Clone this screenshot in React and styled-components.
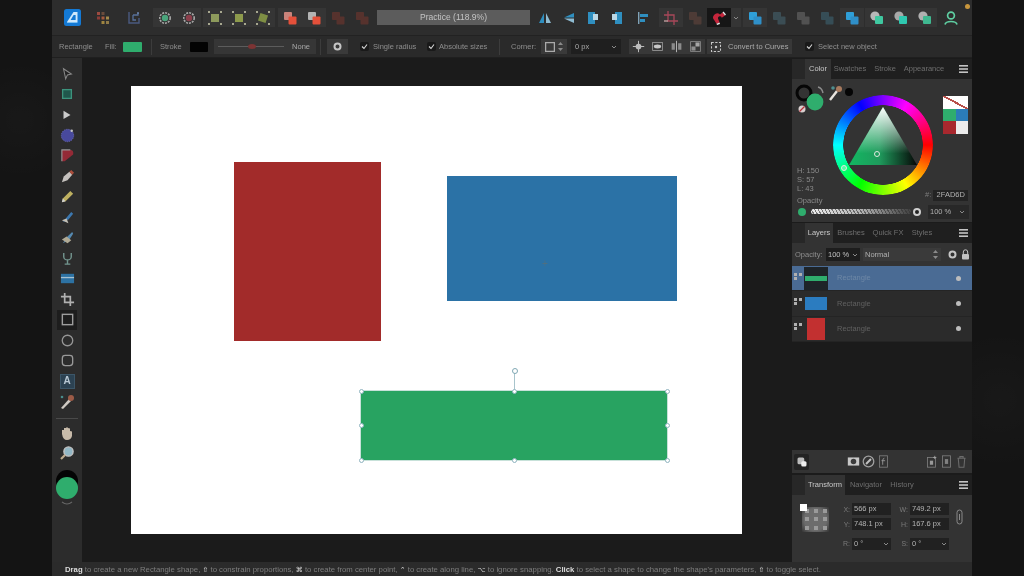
import React from "react";
import styled, { createGlobalStyle } from "styled-components";

const GlobalStyle = createGlobalStyle`
  html, body {
    margin: 0;
    padding: 0;
    width: 1024px;
    height: 576px;
    overflow: hidden;
    background: #141414;
    font-family: "Liberation Sans", Arial, sans-serif;
  }
`;

const GREEN = "#2fad6d";

/* ---------- small drawings ---------- */

const Svg = ({ s = 16, children }) => (
  <svg width={s} height={s} viewBox="0 0 16 16" fill="none">
    {children}
  </svg>
);

const Logo = () => (
  <svg width="17" height="17" viewBox="0 0 17 17">
    <rect width="17" height="17" rx="2.5" fill="#1479d4" />
    <path d="M9.5 3 L13.5 3 L13.5 13 L3 13 Z" fill="#cfe8fb" />
    <path d="M9.6 6 L6.6 11 L11.6 11 L11.6 6 Z" fill="#1479d4" />
    <path d="M3 13 L13.5 13 L13.5 14 L3 14 Z" fill="#7dc0f2" />
  </svg>
);

const Personas = () => (
  <Svg>
    <rect x="2" y="2" width="3" height="3" fill="#9c4a40" />
    <rect x="6.5" y="2" width="3" height="3" fill="#6b4c3c" />
    <rect x="6.5" y="6.5" width="3" height="3" fill="#a65a3c" />
    <rect x="11" y="6.5" width="3" height="3" fill="#a28a4c" />
    <rect x="2" y="6.5" width="3" height="3" fill="#8c3d38" />
    <rect x="6.5" y="11" width="3" height="3" fill="#a0853f" />
    <rect x="11" y="11" width="3" height="3" fill="#8f7a48" />
  </Svg>
);

const Develop = () => (
  <Svg>
    <path d="M3 2 V13 H13 V8" stroke="#4a5a80" strokeWidth="1.4" />
    <path d="M7 5 H12 V3 M7 5 V10 H10" stroke="#57709a" strokeWidth="1.3" />
    <circle cx="12" cy="3" r="1" fill="#6b84ac" />
  </Svg>
);

const Gear = ({ c }) => (
  <Svg>
    <circle cx="8" cy="8" r="5.2" stroke="#a8a8a8" strokeWidth="1.6" strokeDasharray="2 1" />
    <circle cx="8" cy="8" r="3.2" fill={c} />
  </Svg>
);

const BoxHandles = ({ c, tilt }) => (
  <Svg>
    <rect x="4" y="4" width="8" height="8" fill={c} transform={tilt ? "rotate(18 8 8)" : undefined} />
    {[2, 14].map((x) =>
      [2, 14].map((y) => <rect key={x + "-" + y} x={x - 1} y={y - 1} width="2" height="2" fill="#a8a890" />)
    )}
  </Svg>
);

const Overlap = ({ back, front, dim }) => (
  <Svg>
    <g opacity={dim ? 0.28 : 1}>
      <rect x="2" y="2" width="8" height="8" rx="1" fill={back} />
      <rect x="6.5" y="6.5" width="8" height="8" rx="1" fill={front} />
    </g>
  </Svg>
);

const RoundOverlap = ({ back, front, dim }) => (
  <Svg>
    <g opacity={dim ? 0.28 : 1}>
      <circle cx="6" cy="6" r="4.6" fill={back} />
      <rect x="6" y="6" width="8" height="8" rx="1" fill={front} />
    </g>
  </Svg>
);

const FlipH = () => (
  <Svg>
    <path d="M7 3 V13 H2 Z" fill="#2f8fc0" />
    <path d="M9 3 V13 H14 Z" fill="#8fbcd2" />
  </Svg>
);

const FlipV = () => (
  <Svg>
    <path d="M13 3 L3 7.4 H13 Z" fill="#2f8fc0" />
    <path d="M13 13 L3 8.6 H13 Z" fill="#8fbcd2" />
  </Svg>
);

const Rotate = ({ flip }) => (
  <svg width="16" height="16" viewBox="0 0 16 16" style={flip ? { transform: "scaleX(-1)" } : undefined}>
    <rect x="3" y="2" width="7" height="12" fill="#2f8fc0" />
    <rect x="8" y="4" width="5" height="6" fill="#bcd8e6" />
  </svg>
);

const Align = () => (
  <Svg>
    <rect x="3" y="2" width="1.4" height="12" fill="#7fa3b8" />
    <rect x="5" y="4" width="8" height="3" fill="#2f8fc0" />
    <rect x="5" y="9" width="5" height="3" fill="#2f8fc0" />
  </Svg>
);

const CropRed = () => (
  <Svg>
    <path d="M5 1 V11 H15 M1 5 H11 V15" stroke="#a8485a" strokeWidth="1.3" />
    <path d="M1 11 H5" stroke="#c9a8a8" strokeWidth="1.3" />
  </Svg>
);

const Magnet = () => (
  <Svg>
    <path d="M3.5 10.5 A4 4 0 0 1 9 4.5 L11.5 2.5 L14 5.5 L10.8 7.8 A1.2 1.2 0 0 0 7 8.5 L8.5 12.5 L5.5 13.8 Z" fill="#c4263c" />
    <path d="M5.5 13.8 L8.5 12.5 L9 14 L6 15 Z" fill="#e8e8e8" />
    <path d="M11.5 2.5 L14 5.5 L15 4.6 L12.5 1.6 Z" fill="#e8e8e8" />
  </Svg>
);

const Person = () => (
  <Svg>
    <circle cx="8" cy="5.5" r="3.4" stroke="#5fcfa2" strokeWidth="1.7" />
    <path d="M2 14.5 C3 10.5 13 10.5 14 14.5" stroke="#5fcfa2" strokeWidth="1.7" />
  </Svg>
);

const Chevron = () => (
  <svg width="6" height="6" viewBox="0 0 6 6" fill="none">
    <path d="M1 2 L3 4 L5 2" stroke="#8a8a8a" strokeWidth="1" />
  </svg>
);

const Stepper = () => (
  <svg width="5" height="9" viewBox="0 0 5 9" fill="#8a8a8a">
    <path d="M2.5 0 L5 3 H0 Z" />
    <path d="M2.5 9 L5 6 H0 Z" />
  </svg>
);

const Menu = () => (
  <svg width="9" height="8" viewBox="0 0 9 8" fill="#c4c4c4">
    <rect width="9" height="1.6" />
    <rect y="3.2" width="9" height="1.6" />
    <rect y="6.4" width="9" height="1.6" />
  </svg>
);

const GearSmall = ({ c = "#c6c6c6" }) => (
  <svg width="11" height="11" viewBox="0 0 11 11" fill="none">
    <circle cx="5.5" cy="5.5" r="3" stroke={c} strokeWidth="2" />
  </svg>
);

const Lock = () => (
  <svg width="9" height="11" viewBox="0 0 9 11" fill="none">
    <path d="M2.3 5 V3 A2.2 2.2 0 0 1 6.7 3 V5" stroke="#c4c4c4" />
    <rect x="1" y="5" width="7" height="5.5" rx="1" fill="#c4c4c4" />
  </svg>
);

const Tick = () => (
  <svg width="7" height="7" viewBox="0 0 7 7" fill="none">
    <path d="M1 3.5 L3 5.5 L6 1.5" stroke="#d8d8d8" strokeWidth="1.1" />
  </svg>
);

const Snap = ({ kind }) => (
  <Svg s={13}>
    {kind === 0 && (
      <>
        <circle cx="8" cy="8" r="3.5" fill="#bdbdbd" />
        <path d="M8 1 V15 M1 8 H15" stroke="#bdbdbd" strokeWidth="1.2" />
      </>
    )}
    {kind === 1 && (
      <>
        <rect x="2" y="3" width="12" height="10" stroke="#9d9d9d" />
        <ellipse cx="8" cy="8" rx="4.5" ry="2.4" fill="#c6c6c6" />
      </>
    )}
    {kind === 2 && (
      <>
        <path d="M8 1 V15" stroke="#b5b5b5" strokeWidth="1.2" />
        <rect x="2" y="4" width="4" height="8" fill="#8b8b8b" />
        <rect x="10" y="4" width="4" height="8" fill="#8b8b8b" />
      </>
    )}
    {kind === 3 && (
      <>
        <rect x="2" y="2" width="12" height="12" stroke="#8f8f8f" />
        <rect x="8" y="3" width="5" height="5" fill="#a5a5a5" />
        <rect x="3" y="8" width="5" height="5" fill="#8f8f8f" />
      </>
    )}
  </Svg>
);

const Wells = () => (
  <svg width="60" height="34" viewBox="0 0 60 34" fill="none">
    <circle cx="9" cy="11" r="7" stroke="#060606" strokeWidth="3" />
    <circle cx="20" cy="20" r="8.4" fill={GREEN} />
    <circle cx="7" cy="27" r="3.5" fill="#d9d0d0" />
    <path d="M4.5 29.5 L9.5 24.5" stroke="#b8333a" strokeWidth="1.2" />
    <path d="M23 5 Q27 6 28 11" stroke="#8d8d8d" strokeWidth="1.4" />
    <path d="M35 18 L42 9" stroke="#e8e4de" strokeWidth="2.4" />
    <circle cx="44" cy="7" r="3" fill="#a87a5e" />
    <circle cx="38" cy="6" r="1.8" fill="#4f8f8f" />
    <circle cx="54" cy="10" r="4" fill="#050505" />
  </svg>
);

/* left tool icons */
const ToolIcon = ({ n }) => {
  switch (n) {
    case "move":
      return <Svg s={14}><path d="M4 2 L13 8 L8.5 9 L6.5 13.5 Z" stroke="#9a9a9a" strokeWidth="1.2" fill="#222" /></Svg>;
    case "artboard":
      return <Svg s={14}><rect x="3" y="3" width="10" height="10" fill="#1f5f52" stroke="#3fa58c" strokeWidth="1.5" /></Svg>;
    case "node":
      return <Svg s={14}><path d="M4 3 L12 8 L4 12.5 Z" fill="#e6e6e6" /></Svg>;
    case "contour":
      return <Svg s={15}><circle cx="8" cy="8" r="6.6" fill="#4d4fb0" stroke="#6f70c8" strokeDasharray="1.4 1" /><circle cx="12.5" cy="3" r="1.3" fill="#ddd" /></Svg>;
    case "corner":
      return <Svg s={15}><path d="M2 14 V2 H11 Q15 2 14 7 L5 14 Z" fill="#a52a38" /><path d="M2 14 V2 H11" stroke="#aaa" strokeWidth="1.2" /></Svg>;
    case "pen":
      return <Svg s={15}><path d="M2 14 L4 8 L10 3 L13 6 L8 12 Z" fill="#e0dcd8" /><path d="M10 3 L12 1 L15 4 L13 6 Z" fill="#c4543f" /></Svg>;
    case "pencil":
      return <Svg s={15}><path d="M2 14 L3 10 L11 2 L14 5 L6 13 Z" fill="#d8c86a" /><path d="M2 14 L3 10 L6 13 Z" fill="#eee" /></Svg>;
    case "vector":
      return <Svg s={15}><path d="M3 13 L7 8 L12 2 L14 4 L9 10 Z" fill="#3f86c8" /><path d="M2 11 L7 9 L9 14 Z" fill="#e0dcd0" /></Svg>;
    case "pixel":
      return <Svg s={15}><path d="M3 14 L8 7 L13 2 L14 4 L10 10 Z" fill="#5d9ac8" /><path d="M2 10 L7 7 L12 11 L8 14 Z" fill="#c8c0a8" /></Svg>;
    case "glass":
      return <Svg s={15}><path d="M4 2 V6 A4 3.5 0 0 0 12 6 V2 M8 10 V14 M5 14 H11" stroke="#7fa8a0" strokeWidth="1.5" /></Svg>;
    case "place":
      return <Svg s={15}><rect x="1" y="3" width="14" height="10" fill="#2e7fb8" /><path d="M1 7 H15" stroke="#bcdcee" strokeWidth="1.4" /></Svg>;
    case "crop":
      return <Svg s={15}><path d="M5 1 V11 H15 M1 5 H11 V15" stroke="#c8c8c8" strokeWidth="1.8" /></Svg>;
    case "rect":
      return <Svg s={15}><rect x="2.5" y="2.5" width="11" height="11" stroke="#b4b4b4" strokeWidth="1.5" /></Svg>;
    case "ellipse":
      return <Svg s={15}><circle cx="8" cy="8" r="5.6" stroke="#a8a8a8" strokeWidth="1.4" /></Svg>;
    case "round":
      return <Svg s={15}><rect x="2.5" y="2.5" width="11" height="11" rx="3" stroke="#acacac" strokeWidth="1.4" /></Svg>;
    case "text":
      return <Labelled>A</Labelled>;
    case "brush":
      return <Svg s={16}><path d="M2 14 L10 5 L12 7 L4 15 Z" fill="#ece6de" /><circle cx="12" cy="4" r="3" fill="#b0644c" /><circle cx="3" cy="3" r="1.3" fill="#4f9f9f" /></Svg>;
    case "hand":
      return <Svg s={16}><path d="M3 9 V5 L5 5 V3 L7 3 V2.5 H9 V3 L11 3.5 V6 L13 6.5 V11 Q12 15 8 15 Q4 15 3 9 Z" fill="#e4d4c0" /></Svg>;
    case "zoom":
      return <Svg s={16}><circle cx="9.5" cy="6.5" r="4.6" fill="#a4d0e0" stroke="#e0e0e0" strokeWidth="1.4" /><path d="M6 10 L2 14" stroke="#d8c2a0" strokeWidth="2.2" /></Svg>;
    default:
      return null;
  }
};

const Labelled = styled.span`
  width: 15px;
  height: 15px;
  display: flex;
  align-items: center;
  justify-content: center;
  background: #2c4252;
  border: 1px solid #3c5668;
  box-sizing: border-box;
  color: #b8c8d4;
  font-size: 10px;
  font-weight: bold;
`;

/* ---------- data ---------- */

const topLeft = [
  { ml: 0, icon: <Logo /> },
  { ml: 7, icon: <Personas /> },
  { ml: 7, icon: <Develop /> },
  { ml: 7, on: 1, icon: <Gear c="#4aa57c" /> },
  { ml: 0, on: 1, icon: <Gear c="#8c3f4c" /> },
  { ml: 2, on: 1, icon: <BoxHandles c="#8d9a5c" /> },
  { ml: 0, on: 1, icon: <BoxHandles c="#8d9a4c" /> },
  { ml: 0, on: 1, icon: <BoxHandles c="#7f8f44" tilt /> },
  { ml: 3, on: 1, icon: <Overlap back="#c9837a" front="#e4503a" /> },
  { ml: 0, on: 1, icon: <Overlap back="#b4b4b4" front="#e4503a" /> },
  { ml: 0, icon: <Overlap back="#c04030" front="#c04030" dim /> },
  { ml: 0, icon: <Overlap back="#c04030" front="#c04030" dim /> },
];

const topRight = [
  { ml: 3, icon: <FlipH /> },
  { ml: 0, icon: <FlipV /> },
  { ml: 0, icon: <Rotate /> },
  { ml: 0, icon: <Rotate flip /> },
  { ml: 2, icon: <Align /> },
  { ml: 4, on: 1, icon: <CropRed /> },
  { ml: 0, icon: <Overlap back="#a06050" front="#a06050" dim /> },
  { ml: 0, dark: 1, icon: <Magnet /> },
  { ml: 0, narrow: 1, on: 1, icon: <Chevron /> },
  { ml: 2, on: 1, icon: <Overlap back="#2f9fd8" front="#2f8fc8" /> },
  { ml: 0, icon: <Overlap back="#5f9fb8" front="#5f9fb8" dim /> },
  { ml: 0, icon: <Overlap back="#b0b0b0" front="#b0b0b0" dim /> },
  { ml: 0, icon: <Overlap back="#4f9fc0" front="#4f9fc0" dim /> },
  { ml: 1, on: 1, icon: <Overlap back="#2f9fd8" front="#2f8fc8" /> },
  { ml: 1, on: 1, icon: <RoundOverlap back="#b8b8b8" front="#3fc8a0" /> },
  { ml: 0, on: 1, icon: <RoundOverlap back="#a8a8a8" front="#2fc8b0" /> },
  { ml: 0, on: 1, icon: <RoundOverlap back="#b0b0b0" front="#3fb890" /> },
  { ml: 2, icon: <Person /> },
];

const tools = [
  "move", "artboard", "node", "contour", "corner", "pen", "pencil", "vector", "pixel",
  "glass", "place", "crop", "rect", "ellipse", "round", "text", "brush",
];

const handles = [
  [0, 0], [50, 0], [100, 0],
  [0, 50], [100, 50],
  [0, 100], [50, 100], [100, 100],
];

const layers = [
  { color: GREEN, h: 5, w: 22, on: true, frame: true },
  { color: "#2b7cc0", h: 13, w: 22 },
  { color: "#c23030", h: 22, w: 18 },
];

/* ---------- page ---------- */

export default function App() {
  return (
    <>
      <GlobalStyle />
      <Stage>
        <AppWindow>
          <Toolbar>
            {topLeft.map((t, i) => (
              <Slot key={i} $ml={t.ml} $on={t.on}>{t.icon}</Slot>
            ))}
            <Title>Practice (118.9%)</Title>
            {topRight.map((t, i) => (
              <Slot key={i} $ml={t.ml} $on={t.on} $dark={t.dark} $narrow={t.narrow}>{t.icon}</Slot>
            ))}
            <Notify />
          </Toolbar>

          <ContextBar>
            <Cap $w={33}>Rectangle</Cap>
            <Cap $w={11} $ml={13}>Fill:</Cap>
            <FillSwatch $ml={7} $w={19} $c={GREEN} />
            <VLine $ml={9} />
            <Cap $w={21} $ml={8}>Stroke</Cap>
            <FillSwatch $ml={9} $w={18} $c="#030303" />
            <StrokeBox>
              <StrokeLine><RedTick /></StrokeLine>
              <span>None</span>
            </StrokeBox>
            <VLine $ml={4} />
            <CtxButton $ml={6} $w={21}><GearSmall /></CtxButton>
            <CheckBox $ml={12}><Tick /></CheckBox>
            <Cap $w={44} $ml={4}>Single radius</Cap>
            <CheckBox $ml={10}><Tick /></CheckBox>
            <Cap $w={48} $ml={3}>Absolute sizes</Cap>
            <VLine $ml={12} />
            <Cap $w={25} $ml={11}>Corner:</Cap>
            <CtxButton $ml={5} $w={26}>
              <Svg s={10}><rect x="1" y="1" width="14" height="14" stroke="#aaa" strokeWidth="2" /></Svg>
              <Stepper />
            </CtxButton>
            <CtxInput>
              <span>0 px</span>
              <Chevron />
            </CtxInput>
            {[0, 1, 2, 3].map((k) => (
              <SnapButton key={k} $ml={k === 0 ? 8 : 0}><Snap kind={k} /></SnapButton>
            ))}
            <ConvertButton>
              <Svg s={12}>
                <rect x="2" y="2" width="12" height="12" stroke="#c8c8c8" strokeDasharray="3 2" strokeWidth="1.4" />
                <circle cx="8" cy="8" r="1.6" fill="#c8c8c8" />
              </Svg>
              Convert to Curves
            </ConvertButton>
            <CheckBox $ml={13}><Tick /></CheckBox>
            <Cap $w={60} $ml={4}>Select new object</Cap>
          </ContextBar>

          <Middle>
            <ToolColumn>
              {tools.map((n) => (
                <ToolButton key={n} $on={n === "rect"}><ToolIcon n={n} /></ToolButton>
              ))}
              <ToolRule />
              <ToolButton><ToolIcon n="hand" /></ToolButton>
              <ToolButton><ToolIcon n="zoom" /></ToolButton>
              <ToolWell>
                <svg width="28" height="40" viewBox="0 0 28 40">
                  <circle cx="14" cy="12" r="11" fill="#040404" />
                  <circle cx="14" cy="19" r="11" fill={GREEN} />
                  <path d="M9 33 Q14 37 19 33" stroke="#666" fill="none" strokeWidth="1.2" />
                </svg>
              </ToolWell>
            </ToolColumn>

            <Canvas>
              <Artboard>
                <RedShape />
                <BlueShape><Cursor>+</Cursor></BlueShape>
                <GreenShape>
                  <RotateStem />
                  <RotateKnob />
                  {handles.map(([x, y]) => (
                    <Handle key={x + "-" + y} $x={x} $y={y} />
                  ))}
                </GreenShape>
              </Artboard>
            </Canvas>

            <Side>
              <Panel $h={163}>
                <Tabs>
                  <Grip />
                  <Tab $on $w={26}>Color</Tab>
                  <Tab $w={34}>Swatches</Tab>
                  <Tab $w={34}>Stroke</Tab>
                  <Tab $w={42}>Appearance</Tab>
                  <MenuSlot><Menu /></MenuSlot>
                </Tabs>
                <ColorBody>
                  <ColorLeft>
                    <WellHolder><Wells /></WellHolder>
                    <HslList>
                      <div>H: 150</div>
                      <div>S: 57</div>
                      <div>L: 43</div>
                      <OpacityCap>Opacity</OpacityCap>
                    </HslList>
                  </ColorLeft>
                  <Wheel>
                    <WheelRing />
                    <Triangle viewBox="0 0 100 100" width="100" height="100">
                      <defs>
                        <linearGradient id="triHue" x1="0" x2="1" y1="0" y2="0">
                          <stop offset="0" stopColor="#12b862" />
                          <stop offset="0.45" stopColor="#1f9a5c" />
                          <stop offset="1" stopColor="#060606" />
                        </linearGradient>
                        <linearGradient id="triWhite" x1="0" x2="0" y1="0" y2="1">
                          <stop offset="0" stopColor="#ffffff" />
                          <stop offset="0.8" stopColor="#ffffff" stopOpacity="0" />
                        </linearGradient>
                      </defs>
                      <polygon points="50,12 16,70 84,70" fill="url(#triHue)" />
                      <polygon points="50,12 16,70 84,70" fill="url(#triWhite)" />
                    </Triangle>
                    <Marker $x={44} $y={59} />
                    <Marker $x={11} $y={73} $ring />
                  </Wheel>
                  <ColorRight>
                    <SwatchGrid>
                      <NoneSwatch />
                      <Swatch $c={GREEN} />
                      <Swatch $c="#2b7cb8" />
                      <Swatch $c="#a8282e" />
                      <Swatch $c="#ececec" />
                    </SwatchGrid>
                    <HexRow>
                      <span>#:</span>
                      <HexInput>2FAD6D</HexInput>
                    </HexRow>
                  </ColorRight>
                </ColorBody>
                <SliderRow>
                  <SliderDot />
                  <SliderTrack />
                  <SliderKnob />
                  <PercentBox>
                    <span>100 %</span>
                    <Chevron />
                  </PercentBox>
                </SliderRow>
              </Panel>

              <LayersPanel>
                <Tabs>
                  <Grip />
                  <Tab $on $w={28}>Layers</Tab>
                  <Tab $w={32}>Brushes</Tab>
                  <Tab $w={40}>Quick FX</Tab>
                  <Tab $w={26}>Styles</Tab>
                  <MenuSlot><Menu /></MenuSlot>
                </Tabs>
                <LayerHead>
                  <Cap $w={28}>Opacity:</Cap>
                  <LayerInput $w={34} $ml={3}>
                    <span>100 %</span>
                    <Chevron />
                  </LayerInput>
                  <BlendBox>
                    <span>Normal</span>
                    <Stepper />
                  </BlendBox>
                  <HeadIcon $ml={5}><GearSmall /></HeadIcon>
                  <HeadIcon $ml={1}><Lock /></HeadIcon>
                </LayerHead>
                {layers.map((l, i) => (
                  <LayerRow key={i} $on={l.on}>
                    <LayerGrip>
                      <i /><i /><i />
                    </LayerGrip>
                    <LayerThumb $frame={l.frame}>
                      <LayerFill $c={l.color} $w={l.w} $h={l.h} />
                    </LayerThumb>
                    <LayerName $on={l.on}>Rectangle</LayerName>
                    <LayerDot />
                  </LayerRow>
                ))}
                <LayerEmpty />
                <LayerFoot>
                  <FootIcon $dark>
                    <Svg s={12}><rect x="2" y="2" width="9" height="9" rx="2" fill="#bbb" /><rect x="7" y="7" width="7" height="7" rx="2" fill="#eee" /></Svg>
                  </FootIcon>
                  <FootIcon $ml={37}>
                    <Svg s={13}><rect x="1" y="3" width="14" height="10" fill="#c8c8c8" /><circle cx="8" cy="8" r="3.4" fill="#3c3c3c" /></Svg>
                  </FootIcon>
                  <FootIcon>
                    <Svg s={13}><circle cx="8" cy="8" r="6.5" stroke="#a0a0a0" strokeWidth="1.6" /><path d="M5 11 L11 5" stroke="#c0c0c0" strokeWidth="2.4" /></Svg>
                  </FootIcon>
                  <FootIcon>
                    <Svg s={13}><rect x="3" y="1" width="10" height="14" stroke="#808080" /><path d="M9 4 Q7 4 7 7 V12 M5.5 7 H10" stroke="#a0a0a0" /></Svg>
                  </FootIcon>
                  <FootIcon $ml={33}>
                    <Svg s={13}><rect x="3" y="3" width="10" height="12" stroke="#808080" /><rect x="6" y="7" width="4" height="5" fill="#999" /><path d="M12 1 V5 M10 3 H14" stroke="#aaa" /></Svg>
                  </FootIcon>
                  <FootIcon>
                    <Svg s={13}><rect x="3" y="1" width="10" height="14" stroke="#808080" /><rect x="6" y="5" width="4" height="6" fill="#808080" /></Svg>
                  </FootIcon>
                  <FootIcon>
                    <Svg s={13}><path d="M3 4 H13 M6 4 V2 H10 V4 M4 4 L5 15 H11 L12 4" stroke="#6c6c6c" strokeWidth="1.3" /></Svg>
                  </FootIcon>
                </LayerFoot>
              </LayersPanel>

              <TransformPanel>
                <Tabs>
                  <Grip />
                  <Tab $on $w={40}>Transform</Tab>
                  <Tab $w={38}>Navigator</Tab>
                  <Tab $w={32}>History</Tab>
                  <MenuSlot><Menu /></MenuSlot>
                </Tabs>
                <TransformBody>
                  <AnchorPad>
                    <AnchorDots>
                      {Array.from({ length: 9 }).map((_, i) => (
                        <i key={i} />
                      ))}
                    </AnchorDots>
                    <AnchorMark />
                  </AnchorPad>
                  <Fields>
                    <FieldCap>X:</FieldCap>
                    <Field>566 px</Field>
                    <FieldCap>W:</FieldCap>
                    <Field>749.2 px</Field>
                    <LinkIcon>
                      <svg width="7" height="16" viewBox="0 0 7 16" fill="none">
                        <rect x="1" y="1" width="5" height="14" rx="2.5" stroke="#8a8a8a" />
                        <path d="M3.5 5 V11" stroke="#8a8a8a" />
                      </svg>
                    </LinkIcon>
                    <FieldCap>Y:</FieldCap>
                    <Field>748.1 px</Field>
                    <FieldCap>H:</FieldCap>
                    <Field>167.6 px</Field>
                    <FieldCap>R:</FieldCap>
                    <Field $pick>
                      <span>0 °</span>
                      <Chevron />
                    </Field>
                    <FieldCap>S:</FieldCap>
                    <Field $pick>
                      <span>0 °</span>
                      <Chevron />
                    </Field>
                  </Fields>
                </TransformBody>
              </TransformPanel>
            </Side>
          </Middle>

          <StatusBar>
            <b>Drag</b> to create a new Rectangle shape, <Key>⇧</Key> to constrain proportions, <Key>⌘</Key> to create from center point, <Key>⌃</Key> to create along line, <Key>⌥</Key> to ignore snapping. <b>Click</b> to select a shape to change the shape's parameters, <Key>⇧</Key> to toggle select.
          </StatusBar>
        </AppWindow>
      </Stage>
    </>
  );
}

/* ---------- shell ---------- */

const Stage = styled.div`
  width: 1024px;
  height: 576px;
  padding-left: 52px;
  box-sizing: border-box;
  overflow: hidden;
  background-color: #141414;
  background-image:
    radial-gradient(circle at 20px 120px, rgba(255, 255, 255, 0.02), transparent 60px),
    radial-gradient(circle at 1000px 400px, rgba(255, 255, 255, 0.02), transparent 70px);
`;

const AppWindow = styled.div`
  width: 920px;
  height: 576px;
  display: flex;
  flex-direction: column;
  background: #1b1b1b;
  color: #9a9a9a;
  font-size: 8px;
  line-height: 1;
  filter: blur(0.6px);
`;

const Toolbar = styled.div`
  position: relative;
  height: 36px;
  flex: none;
  display: flex;
  align-items: center;
  box-sizing: border-box;
  padding-left: 8px;
  background: #2d2d2d;
  border-bottom: 1px solid #222;
`;

const Slot = styled.div`
  width: ${(p) => (p.$narrow ? 10 : 24)}px;
  height: 19px;
  flex: none;
  margin-left: ${(p) => p.$ml || 0}px;
  display: flex;
  align-items: center;
  justify-content: center;
  background: ${(p) => (p.$dark ? "#161616" : p.$on ? "#353535" : "transparent")};
`;

const Title = styled.div`
  width: 153px;
  height: 15px;
  flex: none;
  margin-left: 3px;
  display: flex;
  align-items: center;
  justify-content: center;
  background: #5c5c5c;
  color: #c4c4c4;
  font-size: 8.5px;
`;

const Notify = styled.span`
  position: absolute;
  top: 4px;
  left: 913px;
  width: 5px;
  height: 5px;
  border-radius: 50%;
  background: #c8963c;
`;

const ContextBar = styled.div`
  height: 22px;
  flex: none;
  display: flex;
  align-items: center;
  box-sizing: border-box;
  padding-left: 7px;
  background: #2a2a2a;
  border-bottom: 1px solid #1f1f1f;
`;

const Cap = styled.span`
  width: ${(p) => p.$w}px;
  flex: none;
  margin-left: ${(p) => p.$ml || 0}px;
  white-space: nowrap;
  color: #8e8e8e;
  font-size: 7.5px;
`;

const FillSwatch = styled.span`
  width: ${(p) => p.$w}px;
  height: 10px;
  flex: none;
  margin-left: ${(p) => p.$ml}px;
  border-radius: 1px;
  background: ${(p) => p.$c};
`;

const VLine = styled.span`
  width: 1px;
  height: 16px;
  flex: none;
  margin-left: ${(p) => p.$ml}px;
  background: #3c3c3c;
`;

const StrokeBox = styled.div`
  width: 102px;
  height: 15px;
  flex: none;
  margin-left: 6px;
  display: flex;
  align-items: center;
  justify-content: space-between;
  box-sizing: border-box;
  padding: 0 6px 0 4px;
  background: #363636;
  color: #a8a8a8;
  font-size: 7.5px;
`;

const StrokeLine = styled.div`
  position: relative;
  width: 66px;
  height: 1px;
  background: #5c5c5c;
`;

const RedTick = styled.span`
  position: absolute;
  left: 30px;
  top: -2px;
  width: 8px;
  height: 5px;
  border-radius: 50%;
  background: #7c3434;
`;

const CtxButton = styled.div`
  width: ${(p) => p.$w}px;
  height: 15px;
  flex: none;
  margin-left: ${(p) => p.$ml}px;
  display: flex;
  align-items: center;
  justify-content: space-evenly;
  background: #3a3a3a;
`;

const CheckBox = styled.span`
  width: 9px;
  height: 9px;
  flex: none;
  margin-left: ${(p) => p.$ml}px;
  display: flex;
  align-items: center;
  justify-content: center;
  border-radius: 2px;
  background: #191919;
`;

const CtxInput = styled.div`
  width: 50px;
  height: 15px;
  flex: none;
  margin-left: 4px;
  display: flex;
  align-items: center;
  justify-content: space-between;
  box-sizing: border-box;
  padding: 0 4px;
  background: #1f1f1f;
  color: #a8a8a8;
  font-size: 7.5px;
`;

const SnapButton = styled.div`
  width: 19px;
  height: 15px;
  flex: none;
  margin-left: ${(p) => p.$ml}px;
  display: flex;
  align-items: center;
  justify-content: center;
  background: #383838;
`;

const ConvertButton = styled.div`
  width: 85px;
  height: 15px;
  flex: none;
  margin-left: 2px;
  display: flex;
  align-items: center;
  gap: 6px;
  box-sizing: border-box;
  padding-left: 3px;
  background: #383838;
  color: #aaa;
  font-size: 7.5px;
  white-space: nowrap;
`;

const Middle = styled.div`
  flex: 1;
  min-height: 0;
  display: flex;
`;

const ToolColumn = styled.div`
  width: 30px;
  flex: none;
  display: flex;
  flex-direction: column;
  align-items: center;
  box-sizing: border-box;
  padding-top: 5.5px;
  background: #2c2c2c;
`;

const ToolButton = styled.div`
  width: 20px;
  height: 20.5px;
  flex: none;
  display: flex;
  align-items: center;
  justify-content: center;
  background: ${(p) => (p.$on ? "#1d1d1d" : "transparent")};

  svg {
    opacity: 0.85;
  }
`;

const ToolRule = styled.span`
  width: 22px;
  height: 1px;
  flex: none;
  margin: 5.5px 0 4px;
  background: #4a4a4a;
`;

const ToolWell = styled.div`
  margin-top: 5px;
  height: 40px;
`;

const Canvas = styled.div`
  flex: 1;
  min-width: 0;
  box-sizing: border-box;
  padding: 28px 50px 28px 49px;
  background: #1b1b1b;
`;

const Artboard = styled.div`
  position: relative;
  width: 611px;
  height: 448px;
  background: #fff;
`;

const RedShape = styled.div`
  position: absolute;
  left: 103px;
  top: 76px;
  width: 147px;
  height: 179px;
  background: #a22b2a;
`;

const BlueShape = styled.div`
  position: absolute;
  left: 316px;
  top: 90px;
  width: 230px;
  height: 125px;
  display: flex;
  align-items: center;
  justify-content: center;
  background: #2b72a6;
`;

const Cursor = styled.span`
  margin: 50px 34px 0 0;
  color: #4f6f80;
  font-size: 10px;
`;

const GreenShape = styled.div`
  position: absolute;
  left: 230px;
  top: 305px;
  width: 306px;
  height: 69px;
  background: #28a361;
  box-shadow: 0 0 0 0.5px #8fc4b4;
`;

const RotateStem = styled.span`
  position: absolute;
  left: 153px;
  top: -18px;
  width: 1px;
  height: 18px;
  background: #a8c4cc;
`;

const RotateKnob = styled.span`
  position: absolute;
  left: 150.5px;
  top: -23px;
  width: 6px;
  height: 6px;
  box-sizing: border-box;
  border-radius: 50%;
  border: 1px solid #7fa8b4;
  background: #fff;
`;

const Handle = styled.span`
  position: absolute;
  left: ${(p) => p.$x}%;
  top: ${(p) => p.$y}%;
  width: 5px;
  height: 5px;
  margin: -2.5px 0 0 -2.5px;
  box-sizing: border-box;
  border-radius: 50%;
  border: 1px solid #8fb4c0;
  background: #fff;
`;

/* ---------- right side ---------- */

const Side = styled.div`
  width: 180px;
  flex: none;
  display: flex;
  flex-direction: column;
  gap: 1px;
  background: #1b1b1b;
  padding-top: 1px;
  box-sizing: border-box;
`;

const Panel = styled.section`
  height: ${(p) => p.$h}px;
  flex: none;
  display: flex;
  flex-direction: column;
  background: #333;
`;

const Tabs = styled.div`
  height: 20px;
  flex: none;
  display: flex;
  align-items: stretch;
  background: #1f1f1f;
`;

const Grip = styled.span`
  width: 13px;
  flex: none;
  background: #272727;
`;

const Tab = styled.span`
  width: ${(p) => p.$w}px;
  flex: none;
  display: flex;
  align-items: center;
  justify-content: center;
  margin-right: ${(p) => (p.$on ? 2 : 1)}px;
  background: ${(p) => (p.$on ? "#333" : "transparent")};
  color: ${(p) => (p.$on ? "#c8c8c8" : "#6e6e6e")};
  font-size: 7.5px;
  white-space: nowrap;
`;

const MenuSlot = styled.span`
  margin-left: auto;
  width: 17px;
  display: flex;
  align-items: center;
  justify-content: center;
`;

const ColorBody = styled.div`
  height: 124px;
  flex: none;
  display: flex;
`;

const ColorLeft = styled.div`
  width: 41px;
  flex: none;
  display: flex;
  flex-direction: column;
`;

const WellHolder = styled.div`
  height: 34px;
  margin: 3px 0 0 3px;
`;

const HslList = styled.div`
  margin: 51px 0 0 5px;
  display: flex;
  flex-direction: column;
  gap: 2px;
  color: #8a8a8a;
  font-size: 7.5px;
  line-height: 7px;
`;

const OpacityCap = styled.div`
  margin-top: 3px;
`;

const Wheel = styled.div`
  position: relative;
  width: 100px;
  height: 100px;
  margin-top: 16px;
  flex: none;
`;

const WheelRing = styled.div`
  width: 100%;
  height: 100%;
  border-radius: 50%;
  background: conic-gradient(from 90deg, #ff0000, #ffff00, #00ff00, #00ffff, #0000ff, #ff00ff, #ff0000);
  -webkit-mask: radial-gradient(circle, transparent 0 39.5px, #000 40px);
  mask: radial-gradient(circle, transparent 0 39.5px, #000 40px);
`;

const Triangle = styled.svg`
  position: absolute;
  left: 0;
  top: 0;
`;

const Marker = styled.span`
  position: absolute;
  left: ${(p) => p.$x}px;
  top: ${(p) => p.$y}px;
  width: 6px;
  height: 6px;
  margin: -3px 0 0 -3px;
  box-sizing: border-box;
  border-radius: 50%;
  border: 1px solid #dfe8df;
  background: ${(p) => (p.$ring ? "rgba(255, 255, 255, 0.3)" : "transparent")};
`;

const ColorRight = styled.div`
  flex: 1;
  padding-top: 17px;
  display: flex;
  flex-direction: column;
`;

const SwatchGrid = styled.div`
  width: 25px;
  margin-left: 10px;
  display: grid;
  grid-template-columns: 1fr 1fr;
  grid-auto-rows: 12.5px;
`;

const Swatch = styled.span`
  background: ${(p) => p.$c};
`;

const NoneSwatch = styled.span`
  grid-column: span 2;
  background: linear-gradient(to top right, #fff 46%, #b8504a 46% 54%, #fff 54%);
`;

const HexRow = styled.div`
  margin: 56px 0 0 -8px;
  display: flex;
  align-items: center;
  gap: 2px;
  color: #7c7c7c;
  font-size: 7.5px;
`;

const HexInput = styled.span`
  width: 35px;
  height: 11px;
  display: flex;
  align-items: center;
  justify-content: center;
  background: #232323;
  color: #b0b0b0;
`;

const SliderRow = styled.div`
  height: 17px;
  flex: none;
  display: flex;
  align-items: center;
  padding-left: 6px;
`;

const SliderDot = styled.span`
  width: 8px;
  height: 8px;
  flex: none;
  border-radius: 50%;
  background: ${GREEN};
`;

const SliderTrack = styled.span`
  width: 100px;
  height: 5px;
  flex: none;
  margin-left: 5px;
  border-radius: 3px;
  background:
    repeating-linear-gradient(60deg, transparent 0 2px, rgba(50, 50, 50, 0.6) 2px 3px),
    linear-gradient(90deg, #eeeeee, #b4b4b4 50%, #484848 96%);
`;

const SliderKnob = styled.span`
  width: 8px;
  height: 8px;
  flex: none;
  margin-left: 2px;
  box-sizing: border-box;
  border-radius: 50%;
  border: 2px solid #d0d0d0;
  background: #222;
`;

const PercentBox = styled.div`
  width: 41px;
  height: 14px;
  flex: none;
  margin-left: 7px;
  display: flex;
  align-items: center;
  justify-content: space-between;
  box-sizing: border-box;
  padding: 0 4px 0 2px;
  background: #282828;
  color: #b0b0b0;
  font-size: 7.5px;
`;

const LayersPanel = styled.section`
  height: 250px;
  flex: none;
  display: flex;
  flex-direction: column;
  background: #1b1b1b;
`;

const LayerHead = styled.div`
  height: 23px;
  flex: none;
  display: flex;
  align-items: center;
  padding-left: 3px;
  background: #333;
`;

const LayerInput = styled.div`
  width: ${(p) => p.$w}px;
  height: 13px;
  margin-left: ${(p) => p.$ml}px;
  flex: none;
  display: flex;
  align-items: center;
  justify-content: space-between;
  box-sizing: border-box;
  padding: 0 2px;
  background: #1d1d1d;
  color: #c0c0c0;
  font-size: 7.5px;
`;

const BlendBox = styled.div`
  width: 78px;
  height: 13px;
  margin-left: 3px;
  flex: none;
  display: flex;
  align-items: center;
  justify-content: space-between;
  box-sizing: border-box;
  padding: 0 3px 0 2px;
  background: #3a3a3a;
  color: #b0b0b0;
  font-size: 7.5px;
`;

const HeadIcon = styled.span`
  width: 13px;
  margin-left: ${(p) => p.$ml}px;
  display: flex;
  justify-content: center;
`;

const LayerRow = styled.div`
  height: 25.3px;
  flex: none;
  display: flex;
  align-items: center;
  box-sizing: border-box;
  padding-left: 2px;
  background: ${(p) => (p.$on ? "#4a6b94" : "#2b2b2b")};
  border-bottom: 1px solid #242424;
`;

const LayerGrip = styled.span`
  width: 9px;
  height: 11px;
  flex: none;
  display: grid;
  grid-template-columns: 3px 3px;
  grid-auto-rows: 3px;
  gap: 1px 2px;

  i {
    background: #b0b0b0;
  }
`;

const LayerThumb = styled.span`
  width: 24px;
  height: 23px;
  flex: none;
  margin-left: 1px;
  display: flex;
  align-items: center;
  justify-content: center;
  background: ${(p) => (p.$frame ? "#1e2428" : "transparent")};
`;

const LayerFill = styled.span`
  width: ${(p) => p.$w}px;
  height: ${(p) => p.$h}px;
  background: ${(p) => p.$c};
`;

const LayerName = styled.span`
  margin-left: 9px;
  color: ${(p) => (p.$on ? "#6e88a6" : "#606060")};
  font-size: 7.5px;
`;

const LayerDot = styled.span`
  width: 5px;
  height: 5px;
  margin-left: auto;
  margin-right: 11px;
  border-radius: 50%;
  background: #bdbdbd;
`;

const LayerEmpty = styled.div`
  flex: 1;
  background: #1b1b1b;
`;

const LayerFoot = styled.div`
  height: 23px;
  flex: none;
  display: flex;
  align-items: center;
  padding-left: 2px;
  background: #333;
`;

const FootIcon = styled.span`
  width: 15px;
  height: 16px;
  flex: none;
  margin-left: ${(p) => p.$ml || 0}px;
  display: flex;
  align-items: center;
  justify-content: center;
  border-radius: 2px;
  background: ${(p) => (p.$dark ? "#232323" : "transparent")};
`;

const TransformPanel = styled.section`
  height: 88px;
  flex: none;
  display: flex;
  flex-direction: column;
  background: #333;
  margin-top: 1px;
`;

const TransformBody = styled.div`
  flex: 1;
  display: flex;
  padding: 8px 0 0 10px;
`;

const AnchorPad = styled.div`
  position: relative;
  width: 27px;
  height: 25px;
  margin-top: 4px;
  flex: none;
`;

const AnchorDots = styled.div`
  width: 27px;
  height: 25px;
  display: grid;
  grid-template-columns: repeat(3, 1fr);
  place-items: center;
  background: radial-gradient(circle, #6c6c6c 60%, transparent 100%);

  i {
    width: 4px;
    height: 4px;
    background: #9a9a9a;
  }
`;

const AnchorMark = styled.span`
  position: absolute;
  left: -2px;
  top: -3px;
  width: 7px;
  height: 7px;
  background: #fff;
`;

const Fields = styled.div`
  margin-left: 13px;
  display: grid;
  grid-template-columns: 10px 39px 19px 39px 20px;
  grid-template-rows: 12px 12px 13px;
  row-gap: 3px;
  align-items: center;

  & > :nth-child(n + 10) {
    margin-top: 8px;
  }
`;

const FieldCap = styled.span`
  text-align: right;
  padding-right: 2px;
  color: #7a7a7a;
  font-size: 7px;
`;

const Field = styled.span`
  height: 12px;
  display: flex;
  align-items: center;
  justify-content: ${(p) => (p.$pick ? "space-between" : "flex-start")};
  box-sizing: border-box;
  padding: 0 2px;
  background: #212121;
  color: #b4b4b4;
  font-size: 7.5px;
  white-space: nowrap;
`;

const LinkIcon = styled.span`
  grid-row: span 2;
  display: flex;
  justify-content: center;
`;

const StatusBar = styled.div`
  height: 14px;
  flex: none;
  box-sizing: border-box;
  padding: 4px 0 0 13px;
  background: #2b2b2b;
  color: #7e7e7e;
  font-size: 7.75px;
  white-space: nowrap;

  b {
    color: #dcdcdc;
  }
`;

const Key = styled.span`
  color: #dcdcdc;
  font-family: "DejaVu Sans", sans-serif;
  font-size: 7px;
`;
